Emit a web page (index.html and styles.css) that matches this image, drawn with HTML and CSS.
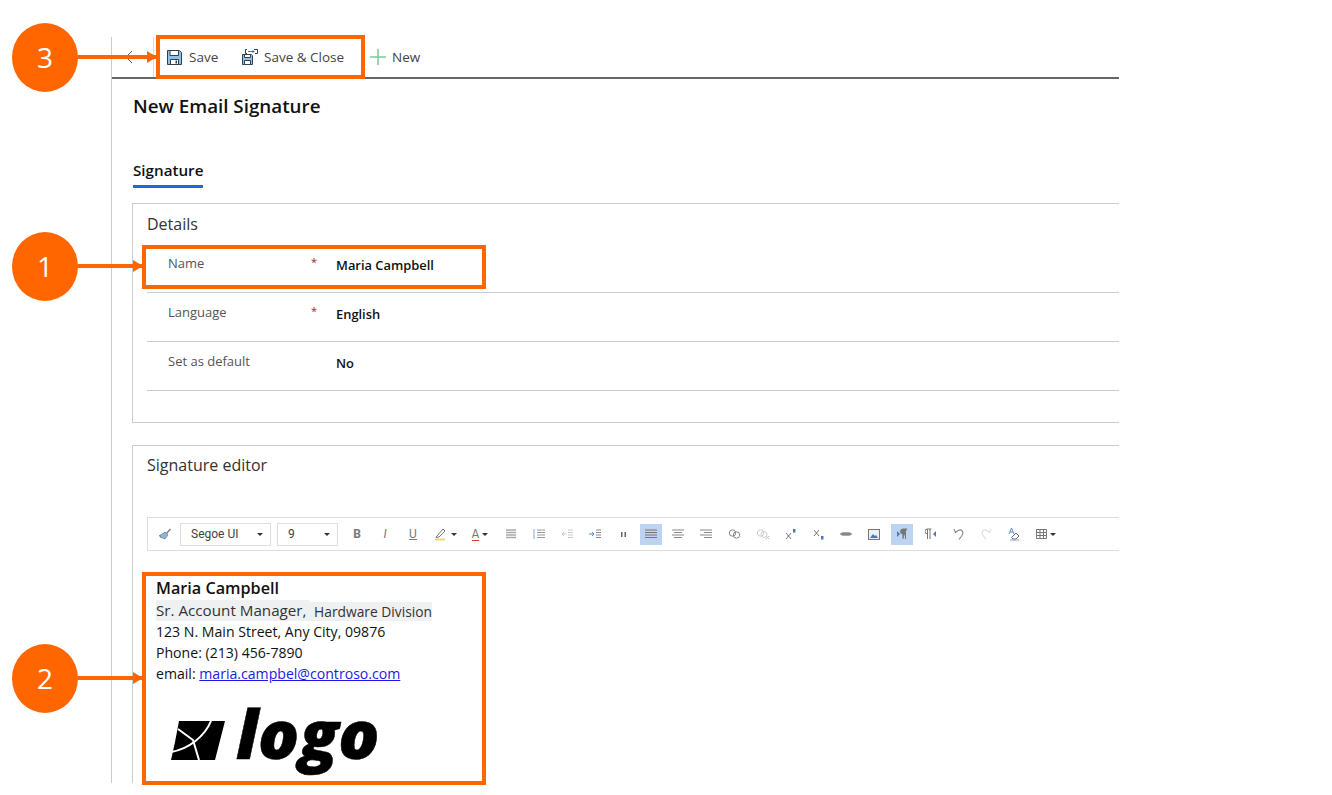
FILE: index.html
```html
<!DOCTYPE html>
<html lang="en">
  <head>
    <meta charset="UTF-8" />
    <title>New Email Signature</title>
    <link rel="stylesheet" href="styles.css">
  </head>
  <body>
    <div class="app">
      <div class="cmdbar">
        <button class="back">
          <svg width="10" height="14" viewBox="0 0 10 14"><path d="M8 1 2 7l6 6" fill="none" stroke="#555" stroke-width="1"/></svg>
        </button>
        <button class="cmd cmd-save">
          <svg width="15" height="15" viewBox="0 0 15 15"><path d="M.5.5h12l2 2v12H.5z" fill="#8fc0e8" stroke="#33404c"/><path d="M3 .5h8.500v5H3z" fill="#fff" stroke="#33404c"/><path d="M3.500 14.500v-5h8v5z" fill="#fff" stroke="#33404c"/><path d="M8.500 10.500h1.500v3H8.500z" fill="#33404c"/></svg>
          Save
        </button>
        <button class="cmd cmd-close">
          <svg width="16" height="16" viewBox="0 0 16 16"><path d="M.5 5.500h9l1 1v9H.5z" fill="#8fc0e8" stroke="#33404c"/><path d="M2.500 5.500h6v3h-6z" fill="#fff" stroke="#33404c"/><path d="M2.500 15.500v-4h6v4z" fill="#fff" stroke="#33404c"/><path d="M5 .5H3.500v4H5M12 .5h3.500v4H13" fill="none" stroke="#33404c"/><path d="M6 2.500h6M10.500 1l1.500 1.500L10.500 4" fill="none" stroke="#2b7cd3"/></svg>
          Save &amp; Close
        </button>
        <button class="cmd cmd-new">
          <svg width="16" height="16" viewBox="0 0 16 16"><path d="M8 0v16M0 8h16" stroke="#7fc99a" stroke-width="1.500"/></svg>
          New
        </button>
      </div>

      <h1 class="page-title">New Email Signature</h1>

      <div class="tabs"><span class="tab">Signature</span></div>

      <section class="card card-details">
        <h2 class="card-title">Details</h2>
        <div class="row"><span class="row-label">Name</span><span class="req">*</span><span class="row-value">Maria Campbell</span></div>
        <div class="row"><span class="row-label">Language</span><span class="req">*</span><span class="row-value">English</span></div>
        <div class="row"><span class="row-label">Set as default</span><span class="req"></span><span class="row-value">No</span></div>
      </section>

      <section class="card card-editor">
        <h2 class="card-title">Signature editor</h2>
        <div class="editor">
          <div class="rte-bar">
            <span class="tool"><svg width="14" height="14" viewBox="0 0 14 14"><path d="M8 6 12 1.500l1 1L9 7z" fill="#777"/><path d="M7 5l3 3-3 4-5-2 1-1-2 0z" fill="#8fb4de" stroke="#667" stroke-width=".6"/></svg></span>
            <span class="select select-font">Segoe UI<i class="caret"></i></span>
            <span class="select select-size">9<i class="caret"></i></span>
            <span class="tool tool-first txt"><b>B</b></span>
            <span class="tool txt"><em>I</em></span>
            <span class="tool txt"><u>U</u></span>
            <span class="tool tool-wide"><svg width="14" height="14" viewBox="0 0 14 14"><path d="M3 9 9 2l2 2-6 6-3 .5z" fill="none" stroke="#777"/><path d="M1 12.500h10" stroke="#f2d675" stroke-width="2"/></svg><i class="caret"></i></span>
            <span class="tool tool-wide tool-narrow txt"><span class="under-red">A</span><i class="caret"></i></span>
            <span class="tool"><svg width="12" height="10" viewBox="0 0 12 10"><path d="M1 1h10M1 3.500h10M1 6h10M1 8.500h10" stroke="#aaa" stroke-width="1.300"/></svg></span>
            <span class="tool"><svg width="12" height="10" viewBox="0 0 12 10"><path d="M4 1h8M4 3.500h8M4 6h8M4 8.500h8" stroke="#999"/><path d="M1 0v10" stroke="#7fa8d8"/></svg></span>
            <span class="tool"><svg width="12" height="10" viewBox="0 0 12 10"><path d="M7 1h5M7 3.500h5M7 6h5M7 8.500h5" stroke="#ccc"/><path d="M5 5H1M3 3 1 5l2 2" fill="none" stroke="#b5cde8"/></svg></span>
            <span class="tool"><svg width="12" height="10" viewBox="0 0 12 10"><path d="M7 1h5M7 3.500h5M7 6h5M7 8.500h5" stroke="#888"/><path d="M0 5h4M3 3l2 2-2 2" fill="none" stroke="#4a8ad0"/></svg></span>
            <span class="tool"><svg width="7" height="5" viewBox="0 0 7 5"><path d="M1 0h1.500v5H1zM4.500 0H6v5H4.500z" fill="#666"/></svg></span>
            <span class="tool active active-align"><svg width="12" height="10" viewBox="0 0 12 10"><path d="M0 1h12M0 3.500h12M0 6h12M0 8.500h12" stroke="#777"/></svg></span>
            <span class="tool"><svg width="12" height="10" viewBox="0 0 12 10"><path d="M0 1h12M2 3.500h8M0 6h12M2 8.500h8" stroke="#888"/></svg></span>
            <span class="tool"><svg width="12" height="10" viewBox="0 0 12 10"><path d="M0 1h12M4 3.500h8M0 6h12M4 8.500h8" stroke="#888"/></svg></span>
            <span class="tool"><svg width="13" height="10" viewBox="0 0 13 10"><circle cx="4.500" cy="4" r="3.200" fill="none" stroke="#888"/><circle cx="8.500" cy="6" r="3.200" fill="none" stroke="#888"/></svg></span>
            <span class="tool"><svg width="13" height="10" viewBox="0 0 13 10"><circle cx="4.500" cy="4" r="3.200" fill="none" stroke="#ccc"/><circle cx="8" cy="5.500" r="3" fill="none" stroke="#ccc"/><path d="M10 7l3 3M13 7l-3 3" stroke="#eaa"/></svg></span>
            <span class="tool"><svg width="11" height="11" viewBox="0 0 11 11"><path d="M1 4l5 6M6 4l-5 6" stroke="#777"/><rect x="8" y="0" width="2.500" height="3.500" fill="#4a78b8"/></svg></span>
            <span class="tool"><svg width="11" height="11" viewBox="0 0 11 11"><path d="M1 1l5 6M6 1 1 7" stroke="#777"/><rect x="8" y="7" width="2.500" height="3.500" fill="#4a78b8"/></svg></span>
            <span class="tool"><svg width="12" height="6" viewBox="0 0 12 6"><path d="M3 1h6a2 2 0 0 1 0 4H3a2 2 0 0 1 0-4z" fill="#aaa"/><path d="M0 3h12" stroke="#666"/></svg></span>
            <span class="tool"><svg width="12" height="11" viewBox="0 0 12 11"><rect x=".5" y=".5" width="11" height="10" fill="#eee" stroke="#777"/><path d="M2 9l3-4 2 2 1-1 2 3z" fill="#4a78b8"/></svg></span>
            <span class="tool active"><svg width="11" height="12" viewBox="0 0 11 12"><path d="M0 3l3 3-3 3z" fill="#4a78b8"/><path d="M6 11V1h4M8.500 11V1M6 1a2.500 2.500 0 0 0 0 5" fill="#777" stroke="#777"/></svg></span>
            <span class="tool"><svg width="11" height="12" viewBox="0 0 11 12"><path d="M11 3 8 6l3 3z" fill="#4a78b8"/><path d="M2.500 11V1h4M5 11V1M2.500 1a2.500 2.500 0 0 0 0 5" fill="none" stroke="#777"/></svg></span>
            <span class="tool"><svg width="11" height="12" viewBox="0 0 11 12"><path d="M1 1l1.500 3.500L5 2.500c4-2 6 2 4 5l-3 4" fill="none" stroke="#888" stroke-width="1.100"/></svg></span>
            <span class="tool"><svg width="11" height="12" viewBox="0 0 11 12"><path d="M10 1 8.500 4.500 6 2.500c-4-2-6 2-4 5l3 4" fill="none" stroke="#ddd" stroke-width="1.100"/></svg></span>
            <span class="tool"><svg width="12" height="14" viewBox="0 0 12 14"><path d="M1 7 3.500 1 6 7M2 5h3" fill="none" stroke="#5a8fd0"/><path d="M5 9l3-3 3 3-3 3H5L3.500 10.500z" fill="none" stroke="#667"/><path d="M2 13h9" stroke="#8ab"/></svg></span>
            <span class="tool tool-wide"><svg width="11" height="10" viewBox="0 0 11 10"><path d="M.5.5h10v9H.5zM.5 3.500h10M.5 6.500h10M4 .5v9M7.500.5v9" fill="none" stroke="#777"/></svg><i class="caret"></i></span>
          </div>
          <div class="sig">
            <div class="sig-name">Maria Campbell</div>
            <div class="sig-title"><span class="hl">Sr. Account Manager,&nbsp;</span><span class="hl hl-small">&nbsp;Hardware Division</span></div>
            <div class="sig-line">123 N. Main Street, Any City, 09876</div>
            <div class="sig-line">Phone: (213) 456-7890</div>
            <div class="sig-line sig-mail">email: <a href="#">maria.campbel@controso.com</a></div>
            <div class="logo">
              <svg width="54" height="39" viewBox="0 0 54 39"><path d="M8 0h46L44 39H0l4-18z" fill="#000"/><path d="M40 0C34 15 18 28 0 31" fill="none" stroke="#fff" stroke-width="2"/><path d="M7 8 22 19l6 20" fill="none" stroke="#fff" stroke-width="2"/></svg>
              <span class="logo-text">logo</span>
            </div>
          </div>
        </div>
      </section>
    </div>

    <!-- orange callouts drawn over the screenshot -->
    <div class="mark mark-save"></div>
    <div class="mark mark-name"></div>
    <div class="mark mark-sig"></div>
    <div class="callout callout-3">3</div>
    <div class="callout callout-1">1</div>
    <div class="callout callout-2">2</div>
    <div class="arrow arrow-3"></div>
    <div class="arrow arrow-1"></div>
    <div class="arrow arrow-2"></div>
  </body>
</html>
```

FILE: styles.css
```css
body {
  margin: 0;
  background-color: #fff;
  font-family: "Open Sans", "Noto Sans", sans-serif;
  color: #111;
  height: 795px;
  overflow: hidden;
}

.app {
  margin: 37px 0 0 111px;
  width: 1007px;
  height: 746px;
  border-left: 1px solid #ccc;
  overflow: hidden;
}

.cmdbar {
  display: flex;
  align-items: center;
  height: 40px;
  border-bottom: 2px solid #666;
}

.cmdbar button {
  display: flex;
  align-items: center;
  border: 0;
  background: none;
  padding: 0;
  font: 13.500px "Open Sans", sans-serif;
  color: #444;
}

.back {
  width: 42px;
  height: 40px;
  padding-left: 12px !important;
  border-right: 1px solid #ddd !important;
}

.cmd svg {
  margin-right: 7px;
}

.cmd-save {
  margin-left: 13px;
  width: 75px;
}

.cmd-close {
  width: 128px;
}

.cmd-close svg {
  margin-right: 6px;
}

.cmd-new svg {
  margin-right: 6px;
}

.page-title {
  margin: 14px 0 0 21px;
  font-size: 18.800px;
  line-height: 26px;
  font-weight: 600;
  color: #111;
}

.tabs {
  margin: 40px 0 0 21px;
  height: 45px;
}

.tab {
  display: inline-block;
  height: 26px;
  line-height: 23px;
  font-size: 15.200px;
  font-weight: 600;
  border-bottom: 3px solid #2266e3;
}

.card {
  margin-left: 20px;
  border: 1px solid #ccc;
  border-right: 0;
}

.card-details {
  margin-top: -1px;
  height: 220px;
  padding-left: 14px;
  box-sizing: border-box;
}

.card-title {
  margin: 0;
  font-size: 16px;
  line-height: 22px;
  font-weight: 400;
  color: #333;
  padding-top: 9px;
}

.row {
  display: flex;
  height: 48px;
  border-bottom: 1px solid #ccc;
  font-size: 13px;
  padding-left: 21px;
}

.row:first-of-type {
  margin-top: 9px;
}

.row-label {
  width: 143px;
  padding-top: 10px;
  line-height: 18px;
  color: #555;
}

.req {
  width: 25px;
  padding-top: 9px;
  font-size: 11px;
  line-height: 18px;
  color: #a4262c;
}

.row-value {
  padding-top: 12px;
  font-size: 12.900px;
  line-height: 18px;
  font-weight: 600;
  color: #111;
}

.card-editor {
  margin-top: 22px;
  padding-left: 14px;
  height: 400px;
}

.card-editor .card-title {
  padding-top: 8px;
}

.editor {
  margin-top: 41px;
}

.rte-bar {
  display: flex;
  align-items: center;
  height: 32px;
  border: 1px solid #ddd;
  border-right: 0;
  padding-left: 3px;
}

.tool {
  display: flex;
  align-items: center;
  justify-content: center;
  width: 28px;
  height: 21px;
  flex: none;
  font: 12px "Roboto", sans-serif;
  color: #777;
}

.tool-first {
  margin-left: 5px;
}

.tool-wide {
  width: 36px;
  gap: 3px;
}

.tool-narrow {
  width: 34px;
}

.active {
  background-color: #bcd3f2;
  width: 22px;
  margin: 0 3px;
}

.active-align {
  margin-right: 2px;
}

.under-red {
  border-bottom: 1px solid #e03c31;
  line-height: 12px;
}

.select {
  display: flex;
  align-items: center;
  justify-content: space-between;
  box-sizing: border-box;
  height: 23px;
  border: 1px solid #ddd;
  padding: 0 7px 0 10px;
  font: 12px "Roboto", sans-serif;
  color: #444;
  flex: none;
}

.select-font {
  width: 91px;
  margin: 0 6px 0 1px;
}

.select-size {
  width: 61px;
}

.caret {
  width: 0;
  height: 0;
  border: 3px solid transparent;
  border-top: 3px solid #333;
  border-bottom: 0;
}

.sig {
  padding: 26px 0 0 9px;
  color: #111;
}

.sig-name {
  font-size: 16.200px;
  line-height: 23px;
  font-weight: 600;
}

.sig-title {
  display: flex;
  align-items: flex-end;
  font-size: 15.200px;
  line-height: 21px;
  color: #333;
}

.hl {
  background-color: #eef0f1;
}

.hl-small {
  font-size: 13.800px;
  line-height: 19px;
}

.sig-line {
  font-size: 14.100px;
  line-height: 21px;
}

.sig-mail a {
  color: #1a1ae6;
}

.logo {
  display: flex;
  align-items: flex-start;
  gap: 11px;
  margin: 2px 0 0 15px;
}

.logo svg {
  margin-top: 35px;
  flex: none;
}

.logo-text {
  font-family: "Open Sans", sans-serif;
  font-style: italic;
  font-weight: 800;
  font-size: 68px;
  line-height: 93px;
  color: #000;
  -webkit-text-stroke: 0.500px #000;
}

.mark {
  position: absolute;
  box-sizing: border-box;
  border: 4px solid #f60;
}

.mark-save {
  left: 156px;
  top: 35px;
  width: 209px;
  height: 44px;
}

.mark-name {
  left: 142px;
  top: 245px;
  width: 344px;
  height: 44px;
}

.mark-sig {
  left: 142px;
  top: 572px;
  width: 344px;
  height: 213px;
}

.callout {
  position: absolute;
  left: 12px;
  width: 66px;
  height: 69px;
  border-radius: 50%;
  background-color: #f60;
  color: #fff;
  font-size: 28px;
  line-height: 69px;
  text-align: center;
}

.callout-3 {
  top: 23px;
}

.callout-1 {
  top: 232px;
}

.callout-2 {
  top: 644px;
}

.arrow {
  position: absolute;
  left: 78px;
  height: 4px;
  background-color: #f60;
}

.arrow::after {
  content: "";
  position: absolute;
  right: -1px;
  top: -4px;
  border-left: 10px solid #f60;
  border-top: 6px solid transparent;
  border-bottom: 6px solid transparent;
}

.arrow-3 {
  top: 55px;
  width: 78px;
}

.arrow-1 {
  top: 264px;
  width: 64px;
}

.arrow-2 {
  top: 676px;
  width: 64px;
}
```
